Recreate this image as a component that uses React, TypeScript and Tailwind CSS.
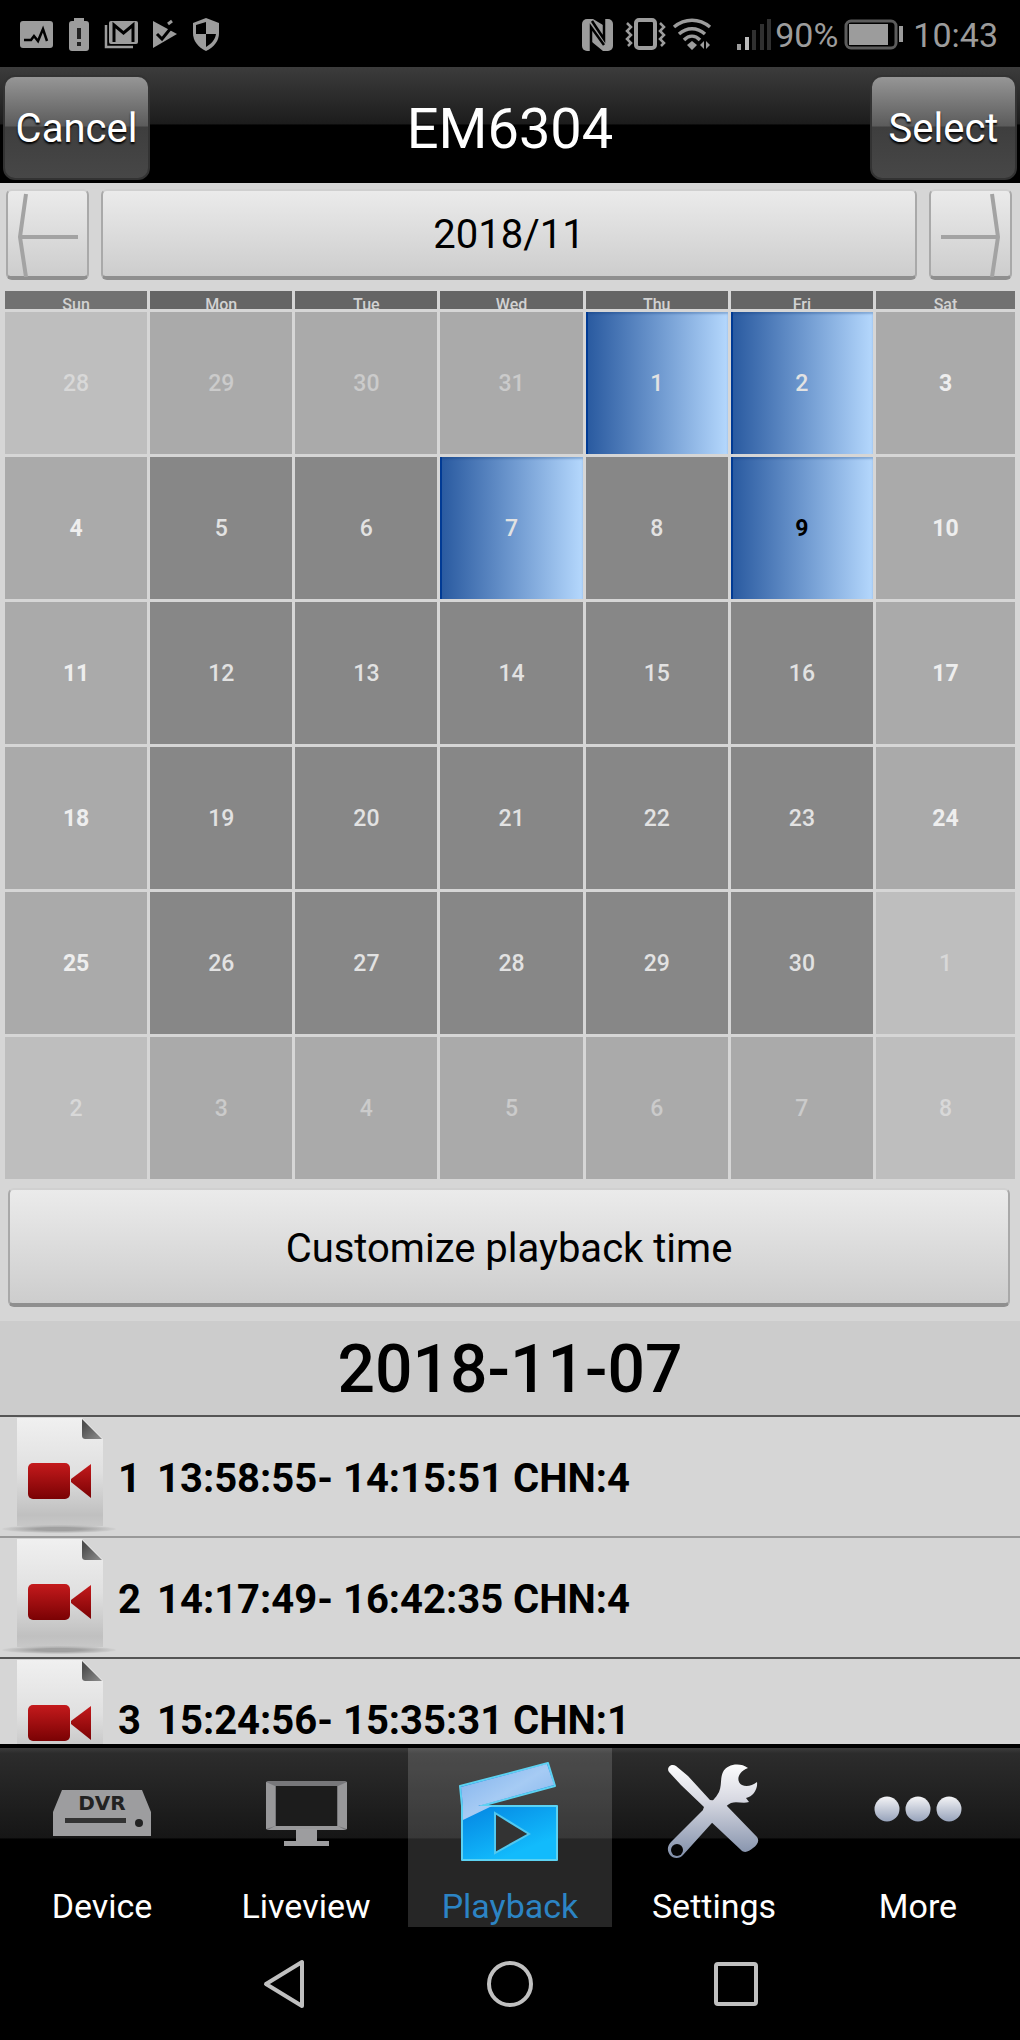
import type { ReactNode } from "react";
import clsx from "clsx";

const weekDays = ["Sun", "Mon", "Tue", "Wed", "Thu", "Fri", "Sat"];

const weeks = [
  [28, 29, 30, 31, 1, 2, 3],
  [4, 5, 6, 7, 8, 9, 10],
  [11, 12, 13, 14, 15, 16, 17],
  [18, 19, 20, 21, 22, 23, 24],
  [25, 26, 27, 28, 29, 30, 1],
  [2, 3, 4, 5, 6, 7, 8],
];

const recordedDays = [1, 2, 7, 9];
const today = 9;

const recordings = [
  { id: 1, text: "13:58:55- 14:15:51 CHN:4" },
  { id: 2, text: "14:17:49- 16:42:35 CHN:4" },
  { id: 3, text: "15:24:56- 15:35:31 CHN:1" },
];

const StatusBar = () => {
  return (
    <div className="flex h-[67px] shrink-0 items-center justify-between bg-black pl-5 pr-[22px] pt-0.5 text-[#9c9c9c]">
      <svg width="202" height="36" viewBox="0 0 202 36" fill="#9c9c9c">
        <rect x="0" y="4" width="33" height="27" rx="3" />
        <path d="M4 23h7l3-4 4 5 5-12 4 12" fill="none" stroke="#000" strokeWidth="2.5" />
        <path d="M54 1h10v3h2a3 3 0 0 1 3 3v24a3 3 0 0 1-3 3H52a3 3 0 0 1-3-3V7a3 3 0 0 1 3-3h2z" />
        <path d="M57 11h4v11h-4zM57 25h4v4h-4z" fill="#222" />
        <rect x="89" y="4" width="29" height="23" rx="2" />
        <path d="M94 25V8l9.500 8 9.500-8v17" fill="none" stroke="#000" strokeWidth="3" />
        <path d="M86 8v22h27" fill="none" stroke="#9c9c9c" strokeWidth="2.500" />
        <path d="M133 4l24 13-24 14z" />
        <path d="M137 17l5 5 13-16" fill="none" stroke="#000" strokeWidth="3" />
        <path d="M148 7l4-3" fill="none" stroke="#9c9c9c" strokeWidth="3" />
        <path d="M186 1l13 5v10c0 8-5 14-13 18-8-4-13-10-13-18V6z" />
        <path d="M186 5v12h-10c0-3 0-6 0-9zM186 17h10c-1 6-5 10-10 13z" fill="#000" />
      </svg>

      <div className="flex items-center">
        <svg width="190" height="36" viewBox="0 0 190 36" fill="none" stroke="#9c9c9c">
          <rect x="1" y="2" width="31" height="32" rx="5" fill="#9c9c9c" stroke="none" />
          <path d="M10 35V10l13 18M23 1v21L11 4" stroke="#000" strokeWidth="2.500" />
          <path d="M12 2h10v6zM11 34h11l-11-9z" fill="#000" stroke="none" />
          <rect x="55" y="3" width="19" height="28" rx="3" strokeWidth="4" />
          <path d="M46 6l4 4-4 4 4 4-4 4 4 4-3 3M79 6l4 4-4 4 4 4-4 4 4 4-3 3" strokeWidth="2.500" />
          <path d="M93 10c11-9 25-9 36 0M98 17c8-7 18-7 26 0M103 23c5-5 11-5 16 0" strokeWidth="3.500" />
          <path d="M106 28l5-4 5 4-5 5zM119 28l4-4v8zM129 28l-4-4v8z" fill="#9c9c9c" stroke="none" />
          <path d="M158 27v6" strokeWidth="4" />
          <path d="M166 20v13" stroke="#bbb" strokeWidth="4" />
          <path d="M173 13v20M181 7v26M188 2v31" stroke="#303030" strokeWidth="4" />
        </svg>
        <span className="ml-1 text-[34px] leading-10">90%</span>
        <svg className="ml-1.5 mr-2.5" width="59" height="36" viewBox="0 0 59 36" fill="none">
          <rect x="2" y="4" width="50" height="27" rx="5" stroke="#5c5c5c" strokeWidth="3" />
          <rect x="5" y="7" width="39" height="21" fill="#9c9c9c" />
          <path d="M57 9v16" stroke="#9c9c9c" strokeWidth="4" />
        </svg>
        <span className="text-[34px] leading-10">10:43</span>
      </div>
    </div>
  );
};

const HeaderButton = ({ children }: { children: ReactNode }) => {
  return (
    <button
      type="button"
      className="h-[105px] w-[147px] rounded-xl border-2 border-[#333] bg-[linear-gradient(#969696_0%,#5c5c5c_48%,#3e3e3e_50%,#474747_100%)] pt-1 text-[40px] leading-10 text-white [text-shadow:0_2px_2px_#000]"
    >
      {children}
    </button>
  );
};

const LightButton = ({ className, label, children }: { className?: string; label?: string; children: ReactNode }) => {
  return (
    <button
      type="button"
      aria-label={label}
      className={clsx(
        "flex items-center justify-center rounded-md border-x-2 border-b-4 border-t-2 border-x-[#a9a9a9] border-b-[#8f8f8f] border-t-[#d0d0d0] bg-linear-to-b from-[#ebebeb] to-[#cdcdcd] text-[40px] leading-12 text-black",
        className,
      )}
    >
      {children}
    </button>
  );
};

const Calendar = () => {
  return (
    <table className="w-full table-fixed border-separate border-spacing-[3px]">
      <colgroup>
        {weekDays.map((day) => (
          <col key={day} className={day === "Sat" ? "w-[139px]" : undefined} />
        ))}
      </colgroup>
      <thead>
        <tr>
          {weekDays.map((day, i) => (
            <th key={day} className={clsx("p-0", i % 6 === 0 ? "bg-[#717171]" : "bg-[#656565]")}>
              <div className="h-[18px] overflow-hidden pt-1 text-base leading-5 font-medium text-[#d2d2d2]">{day}</div>
            </th>
          ))}
        </tr>
      </thead>
      <tbody>
        {weeks.map((week, row) => (
          <tr key={row}>
            {week.map((day, col) => {
              const outside = (row === 0 && day > 20) || (row > 3 && day < 10);
              const weekend = col % 6 === 0;
              const recorded = !outside && recordedDays.includes(day);
              return (
                <td key={col} className="p-0">
                  <button
                    type="button"
                    className={clsx(
                      "block h-[142px] w-full pt-0.5 text-[23px] leading-7",
                      recorded &&
                        "bg-linear-to-r from-[#28599f] to-[#b5d8fd] shadow-[inset_2px_0_0_#003a94,inset_0_2px_2px_#00307040]",
                      !recorded && outside && weekend && "bg-[#bebebe]",
                      !recorded && outside !== weekend && "bg-[#aaaaaa]",
                      !recorded && !outside && !weekend && "bg-[#878787]",
                      outside && weekend && "font-medium text-[#d8d8d8]",
                      outside && !weekend && "font-medium text-[#cbcbcb]",
                      !outside && weekend && "font-bold text-[#eeeeee]",
                      !outside && !weekend && day !== today && "font-medium text-[#e2e2e2]",
                      !outside && day === today && "font-bold text-black",
                    )}
                  >
                    {day}
                  </button>
                </td>
              );
            })}
          </tr>
        ))}
      </tbody>
    </table>
  );
};

const RecordingIcon = () => {
  return (
    <svg className="shrink-0" width="116" height="119" viewBox="0 0 116 119">
      <defs>
        <linearGradient id="paper" x1="0" y1="0" x2="0" y2="1">
          <stop offset="0" stopColor="#f0f0f0" />
          <stop offset="0.5" stopColor="#e0e0e0" />
          <stop offset="0.9" stopColor="#c0c0c0" />
          <stop offset="1" stopColor="#c8c8c8" />
        </linearGradient>
        <linearGradient id="red" x1="0" y1="0" x2="0" y2="1">
          <stop offset="0" stopColor="#c41a1c" />
          <stop offset="1" stopColor="#7a0204" />
        </linearGradient>
        <linearGradient id="fold" x1="0" y1="0" x2="1" y2="1">
          <stop offset="0.2" stopColor="#4e4e4e" />
          <stop offset="1" stopColor="#8e8e8e" />
        </linearGradient>
        <radialGradient id="floor">
          <stop offset="0.4" stopColor="#a0a0a0" />
          <stop offset="1" stopColor="#a0a0a0" stopOpacity="0.1" />
        </radialGradient>
      </defs>
      <path d="M17 1h65l21 21v87H17z" fill="url(#paper)" />
      <path d="M82 2l20 20H86c-3 0-4-1-4-4z" fill="url(#fold)" />
      <ellipse cx="59" cy="112" rx="57" ry="4" fill="url(#floor)" />
      <rect x="28" y="46" width="42" height="36" rx="5" fill="url(#red)" />
      <path d="M91 47v34L71 65v-3z" fill="url(#red)" />
    </svg>
  );
};

const DeviceIcon = () => {
  return (
    <svg width="104" height="118" viewBox="0 0 104 118">
      <path d="M12 42h80l9 22v24H3V64z" fill="#9d9d9f" />
      <text x="52" y="62" textAnchor="middle" fontSize="20" fontWeight="700" fill="#222" className="font-['DejaVu_Sans']">
        DVR
      </text>
      <rect x="15" y="70" width="61" height="5" fill="#333" />
      <circle cx="89" cy="75" r="4" fill="#222" />
    </svg>
  );
};

const LiveviewIcon = () => {
  return (
    <svg width="104" height="118" viewBox="0 0 104 118" fill="#9d9d9f">
      <rect x="12" y="33" width="81" height="49" rx="2" fill="#77777a" />
      <path d="M12 34l9 4v40l-9 3zM93 34l-9 4v40l9 3zM14 82l7-4h63l7 4z" fill="#98989a" />
      <path d="M22 38h61v40H22z" fill="#1c1c1c" />
      <path d="M42 81h21v12h12v5H30v-5h12z" />
    </svg>
  );
};

const PlaybackIcon = () => {
  return (
    <svg width="104" height="118" viewBox="0 0 104 118">
      <defs>
        <linearGradient id="clap" x1="0" y1="0" x2="1" y2="1">
          <stop offset="0" stopColor="#7fb0ec" />
          <stop offset="0.5" stopColor="#a6cbf4" />
          <stop offset="1" stopColor="#7fb0ea" />
        </linearGradient>
        <linearGradient id="board" x1="0" y1="0" x2="0.400" y2="1">
          <stop offset="0.4" stopColor="#0485e2" />
          <stop offset="1" stopColor="#12bbfc" />
        </linearGradient>
      </defs>
      <path
        d="M2 38L90 15l7 23-74 20h76v54H4V58z"
        fill="url(#board)"
        stroke="#5cd2f2"
        strokeWidth="2"
        strokeLinejoin="round"
      />
      <path d="M3 39L89 16l7 21-76 21h14L5 72V58z" fill="url(#clap)" />
      <path d="M37 65l34 21-34 19z" fill="#333" stroke="#50c8f0" strokeWidth="2" />
    </svg>
  );
};

const SettingsIcon = () => {
  return (
    <svg width="104" height="118" viewBox="0 0 104 118">
      <defs>
        <linearGradient id="steel" gradientUnits="userSpaceOnUse" x1="0" y1="14" x2="0" y2="108">
          <stop offset="0" stopColor="#ffffff" />
          <stop offset="0.400" stopColor="#d8d9e2" />
          <stop offset="1" stopColor="#8391ab" />
        </linearGradient>
      </defs>
      <path
        d="M86 20c-8-6-21-4-25 4-3 6-1 13-4 20-3 6-8 10-13 15L9 94c-4 4-4 9-1 13s10 4 13 0l37-41c4-4 6-9 11-11 6-2 12 1 18-1l-3-4c7-1 12-9 11-16-5 4-11 5-15 3-6-3-5-13 6-17z"
        fill="url(#steel)"
      />
      <circle cx="15" cy="102" r="6" fill="#050505" />
      <path
        d="M7 24c-3-4 2-9 7-6l12 10 22 24c5 0 12 2 17 6l30 31c3 4 0 8-4 11s-8 6-12 2L45 70c-4-4-5-7-3-11L19 37z"
        fill="url(#steel)"
      />
    </svg>
  );
};

const MoreIcon = () => {
  return (
    <svg width="104" height="118" viewBox="0 0 104 118">
      <defs>
        <linearGradient id="dot" x1="0" y1="0" x2="0" y2="1">
          <stop offset="0" stopColor="#f4f4f6" />
          <stop offset="1" stopColor="#97a3bb" />
        </linearGradient>
      </defs>
      <circle cx="21" cy="61" r="12.500" fill="url(#dot)" />
      <circle cx="52" cy="61" r="12.500" fill="url(#dot)" />
      <circle cx="83" cy="61" r="12.500" fill="url(#dot)" />
    </svg>
  );
};

const tabs = [
  { name: "Device", icon: <DeviceIcon /> },
  { name: "Liveview", icon: <LiveviewIcon /> },
  { name: "Playback", icon: <PlaybackIcon />, active: true },
  { name: "Settings", icon: <SettingsIcon /> },
  { name: "More", icon: <MoreIcon /> },
];

const App = () => {
  return (
    <div className="flex h-screen flex-col bg-[#d6d6d6] font-[Roboto,sans-serif] text-black">
      <StatusBar />

      <header className="flex h-[116px] shrink-0 items-center justify-between bg-[linear-gradient(#3c3c3c_0%,#1c1c1c_49%,#000_50%)] px-[3px] pt-1">
        <HeaderButton>Cancel</HeaderButton>
        <h1 className="pt-1 text-[56px] leading-16 text-white">EM6304</h1>
        <HeaderButton>Select</HeaderButton>
      </header>

      <div className="flex h-[105px] shrink-0 gap-3 pb-2 pl-1.5 pr-2 pt-1.5">
        <LightButton className="h-[91px] w-[83px] shrink-0" label="Previous month">
          <svg width="79" height="86" viewBox="0 0 79 86" fill="none" stroke="#a3a3a3" strokeWidth="4">
            <path d="M18 3l-6 43 6 40M12 46h58" />
          </svg>
        </LightButton>
        <LightButton className="h-[91px] grow pt-0.5">2018/11</LightButton>
        <LightButton className="h-[91px] w-[83px] shrink-0" label="Next month">
          <svg width="79" height="86" viewBox="0 0 79 86" fill="none" stroke="#a3a3a3" strokeWidth="4">
            <path d="M61 3l6 43-6 40M67 46H10" />
          </svg>
        </LightButton>
      </div>

      <div className="shrink-0 px-0.5">
        <Calendar />
      </div>

      <div className="shrink-0 pb-3.5 pl-2 pr-2.5 pt-1.5">
        <LightButton className="h-[119px] w-full pt-1">Customize playback time</LightButton>
      </div>

      <h2 className="h-[94px] shrink-0 bg-[#cccccc] text-center text-[66px] leading-[98px] font-medium">2018-11-07</h2>

      <ul className="min-h-0 grow overflow-hidden">
        {recordings.map((item) => (
          <li key={item.id} className="h-[121px] border-t-2 border-[#555] even:border-[#999]">
            <a href="#play" className="flex items-center text-[40px] leading-12 font-bold">
              <RecordingIcon />
              <span className="w-[41px] pl-0.5 pt-1">{item.id}</span>
              <span className="pt-1">{item.text}</span>
            </a>
          </li>
        ))}
      </ul>

      <nav className="flex h-[183px] shrink-0 border-t-4 border-black bg-[linear-gradient(#3c3c3c_0%,#2c2c2c_3%,#161616_50%,#000_51%)]">
        {tabs.map((tab) => (
          <a
            key={tab.name}
            href={`#${tab.name.toLowerCase()}`}
            className={clsx(
              "flex grow basis-0 flex-col items-center gap-5 text-[34px] leading-10",
              tab.active ? "bg-white/15 text-[#2c84c4]" : "text-white",
            )}
          >
            {tab.icon}
            <span>{tab.name}</span>
          </a>
        ))}
      </nav>

      <div className="flex h-[113px] shrink-0 items-center justify-center gap-[180px] bg-black">
        <button type="button" aria-label="Back">
          <svg width="46" height="52" viewBox="0 0 46 52" fill="none" stroke="#c0c0c0" strokeWidth="4" strokeLinejoin="round">
            <path d="M41 4v44L5 26z" />
          </svg>
        </button>
        <button type="button" aria-label="Home">
          <svg width="46" height="52" viewBox="0 0 46 52" fill="none" stroke="#c0c0c0" strokeWidth="4">
            <circle cx="23" cy="26" r="21" />
          </svg>
        </button>
        <button type="button" aria-label="Recent apps">
          <svg width="46" height="52" viewBox="0 0 46 52" fill="none" stroke="#c0c0c0" strokeWidth="4">
            <rect x="3" y="6" width="40" height="40" rx="2" />
          </svg>
        </button>
      </div>
    </div>
  );
};

export default App;
